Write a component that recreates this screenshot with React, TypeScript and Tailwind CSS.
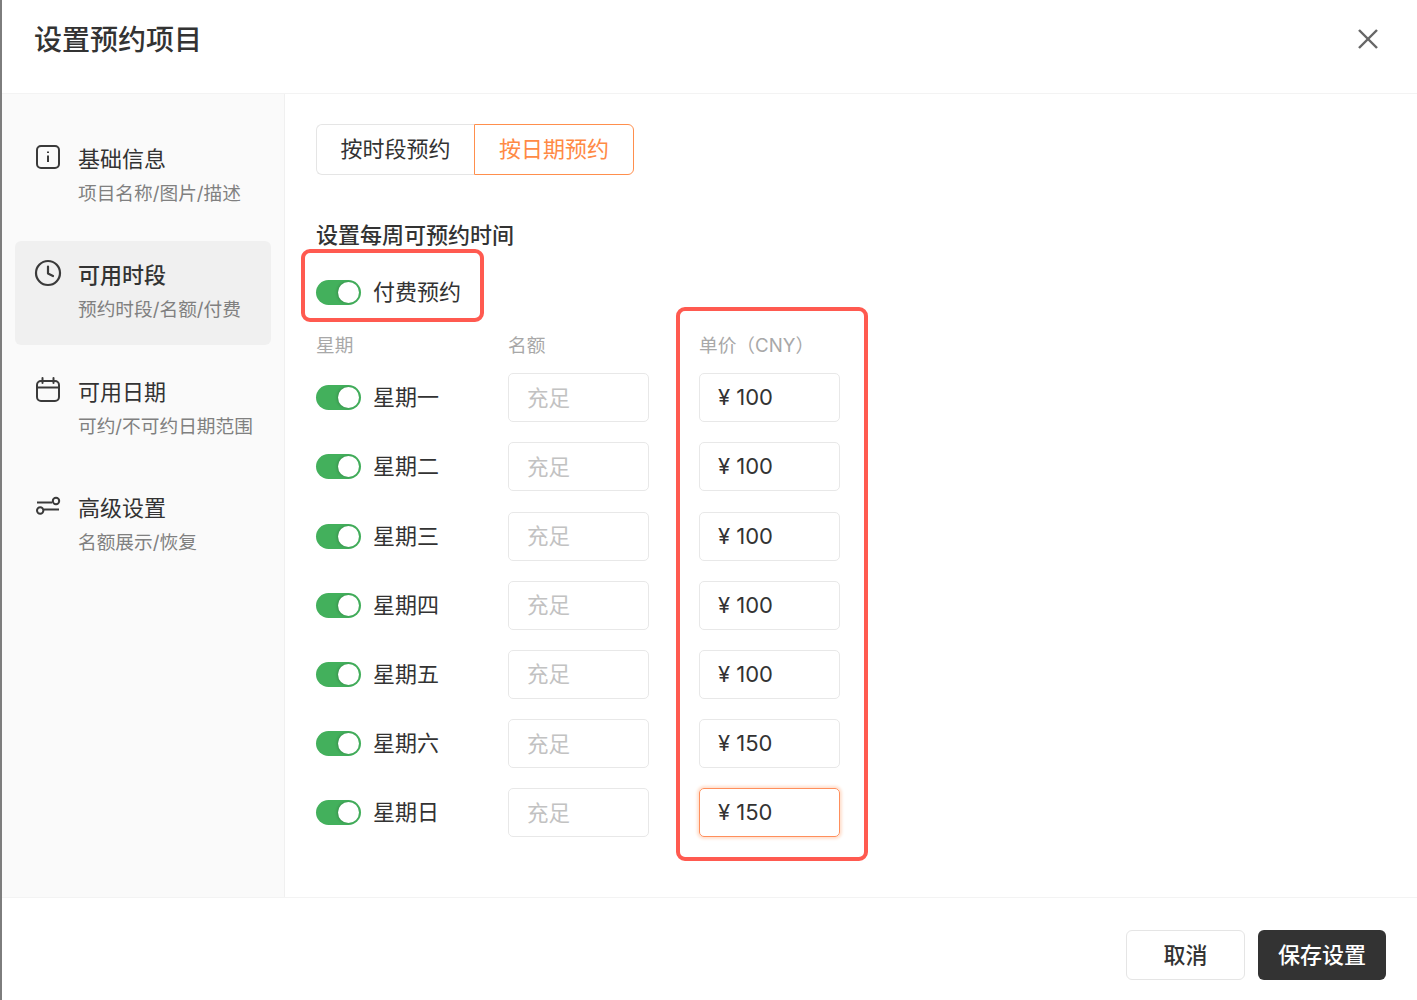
import { useState } from "react";

const font = "font-['Inter','Noto_Sans_CJK_SC',sans-serif]";

const menuItems = [
  { key: "info", title: "基础信息", sub: "项目名称/图片/描述" },
  { key: "time", title: "可用时段", sub: "预约时段/名额/付费", active: true },
  { key: "date", title: "可用日期", sub: "可约/不可约日期范围" },
  { key: "adv", title: "高级设置", sub: "名额展示/恢复" },
];

const weekRows = [
  { day: "星期一", price: "100" },
  { day: "星期二", price: "100" },
  { day: "星期三", price: "100" },
  { day: "星期四", price: "100" },
  { day: "星期五", price: "100" },
  { day: "星期六", price: "150" },
  { day: "星期日", price: "150", focused: true },
];

function MenuIcon({ name }: { name: string }) {
  if (name === "info") {
    return (
      <svg width="28" height="28" viewBox="0 0 28 28" fill="none" stroke="#3a3a3a" strokeWidth="2">
        <rect x="3" y="3" width="22" height="22" rx="4" />
        <path d="M14 12.5v6.5" />
        <path d="M14 8.5v1.6" />
      </svg>
    );
  }
  if (name === "time") {
    return (
      <svg width="28" height="28" viewBox="0 0 28 28" fill="none" stroke="#3a3a3a" strokeWidth="2.2" strokeLinecap="round" strokeLinejoin="round">
        <circle cx="14" cy="14" r="12" />
        <path d="M14 7.5v7l5 2.5" />
      </svg>
    );
  }
  if (name === "date") {
    return (
      <svg width="28" height="28" viewBox="0 0 28 28" fill="none" stroke="#3a3a3a" strokeWidth="2" strokeLinecap="round">
        <rect x="3" y="5" width="22" height="20" rx="4" />
        <path d="M3 11.5h22" />
        <path d="M8.5 2v5" />
        <path d="M19.5 2v5" />
      </svg>
    );
  }
  return (
    <svg width="28" height="28" viewBox="0 0 28 28" fill="none" stroke="#3a3a3a" strokeWidth="2">
      <path d="M3 10.5h15" />
      <circle cx="22" cy="9" r="3.2" />
      <circle cx="6.2" cy="18.5" r="3.2" />
      <path d="M10 17.5h15" />
    </svg>
  );
}

function Toggle() {
  return (
    <div className="flex h-[25px] w-[45px] shrink-0 items-center justify-end rounded-full bg-[#43b05c] pr-[2px]">
      <div className="h-[21px] w-[21px] rounded-full bg-white shadow-[-1px_0_3px_rgba(0,0,0,0.2)]" />
    </div>
  );
}

export default function App() {
  const [tab, setTab] = useState("date");

  return (
    <div className={`${font} flex h-[1000px] w-[1417px] flex-col overflow-hidden border-l-2 border-[#7d7d7d] bg-white text-[#333333]`}>
      <header className="flex h-[94px] shrink-0 items-center justify-between border-b border-[#f3f3f3] pb-[13px] pl-[32px] pr-[37px]">
        <h1 className="text-[28px] leading-[40px] font-medium">设置预约项目</h1>
        <button className="mb-[3px] text-[#666666]">
          <svg width="24" height="24" viewBox="0 0 24 24" fill="none" stroke="currentColor" strokeWidth="2.4">
            <path d="M3 3l18 18" />
            <path d="M21 3L3 21" />
          </svg>
        </button>
      </header>

      <div className="flex min-h-0 flex-1">
        <aside className="flex w-[283px] shrink-0 flex-col gap-[12.5px] border-r border-[#f0f0f0] bg-[#fafafa] px-[13px] pt-[30.5px]">
          {menuItems.map((item) => (
            <div
              key={item.key}
              className={`flex h-[104px] gap-[16px] rounded-[6px] pl-[19px] pt-[18px] ${item.active ? "bg-[#f0f0f0]" : ""}`}
            >
              <div className="h-[28px] w-[28px] shrink-0">
                <MenuIcon name={item.key} />
              </div>
              <div>
                <div className={`text-[22px] leading-[32px] ${item.active ? "font-medium" : ""}`}>{item.title}</div>
                <div className="mt-[4px] text-[18.7px] leading-[30px] text-[#808080]">{item.sub}</div>
              </div>
            </div>
          ))}
        </aside>

        <main className="relative flex-1 pl-[31px] pt-[30px]">
          <div className="flex h-[51px] w-[318px] text-[22px]">
            <button
              onClick={() => setTab("time")}
              className="h-full w-[158px] rounded-l-[6px] border border-r-0 border-[#e5e5e5]"
            >
              按时段预约
            </button>
            <button
              onClick={() => setTab("date")}
              className={`h-full w-[160px] rounded-r-[6px] border ${tab === "date" ? "border-[#ff8f4d] text-[#ff8a45]" : "border-[#e5e5e5]"}`}
            >
              按日期预约
            </button>
          </div>

          <h2 className="mt-[45px] text-[22px] leading-[30px] font-medium">设置每周可预约时间</h2>

          <div className="mt-[27px] flex h-[30px] items-center gap-[12px] text-[22px]">
            <Toggle />
            <span>付费预约</span>
          </div>

          <div className="mt-[24px] grid w-[524px] grid-cols-[192px_141px_50px_141px] items-center gap-y-[20.2px]">
            <div className="-mb-[8px] text-[18.7px] leading-[30px] text-[#a8a8a8]">星期</div>
            <div className="-mb-[8px] text-[18.7px] leading-[30px] text-[#a8a8a8]">名额</div>
            <div />
            <div className="-mb-[8px] text-[18.7px] leading-[30px] text-[#a8a8a8]">单价（CNY）</div>
            {weekRows.map((row) => (
              <div key={row.day} className="contents">
                <div className="flex items-center gap-[12px]">
                  <Toggle />
                  <span className="text-[22px]">{row.day}</span>
                </div>
                <div className="flex h-[49px] items-center rounded-[5px] border border-[#e8e8e8] pl-[18px] text-[21.5px] text-[#c2c2c2]">
                  充足
                </div>
                <div />
                <div
                  className={`flex h-[49px] items-center rounded-[5px] border pl-[18px] text-[22px] ${row.focused ? "border-[#ff8f5c] shadow-[0_0_3px_2px_#ffe0cf]" : "border-[#e8e8e8]"}`}
                >
                  ¥ {row.price}
                </div>
              </div>
            ))}
          </div>

          {/* red highlight frames drawn over the form */}
          <div className="pointer-events-none absolute left-[16px] top-[155px] h-[73px] w-[183px] rounded-[9px] border-[4px] border-[#ff5a50]" />
          <div className="pointer-events-none absolute left-[391px] top-[213px] h-[554px] w-[192px] rounded-[9px] border-[4px] border-[#ff5a50]" />
        </main>
      </div>

      <footer className="flex h-[103px] shrink-0 items-start justify-end gap-[13px] border-t border-[#f3f3f3] pr-[31px] pt-[32px] text-[22px]">
        <button className="h-[50px] w-[119px] rounded-[6px] border border-[#e5e5e5] font-medium">取消</button>
        <button className="h-[50px] w-[128px] rounded-[6px] bg-[#333333] font-medium text-white">保存设置</button>
      </footer>
    </div>
  );
}
